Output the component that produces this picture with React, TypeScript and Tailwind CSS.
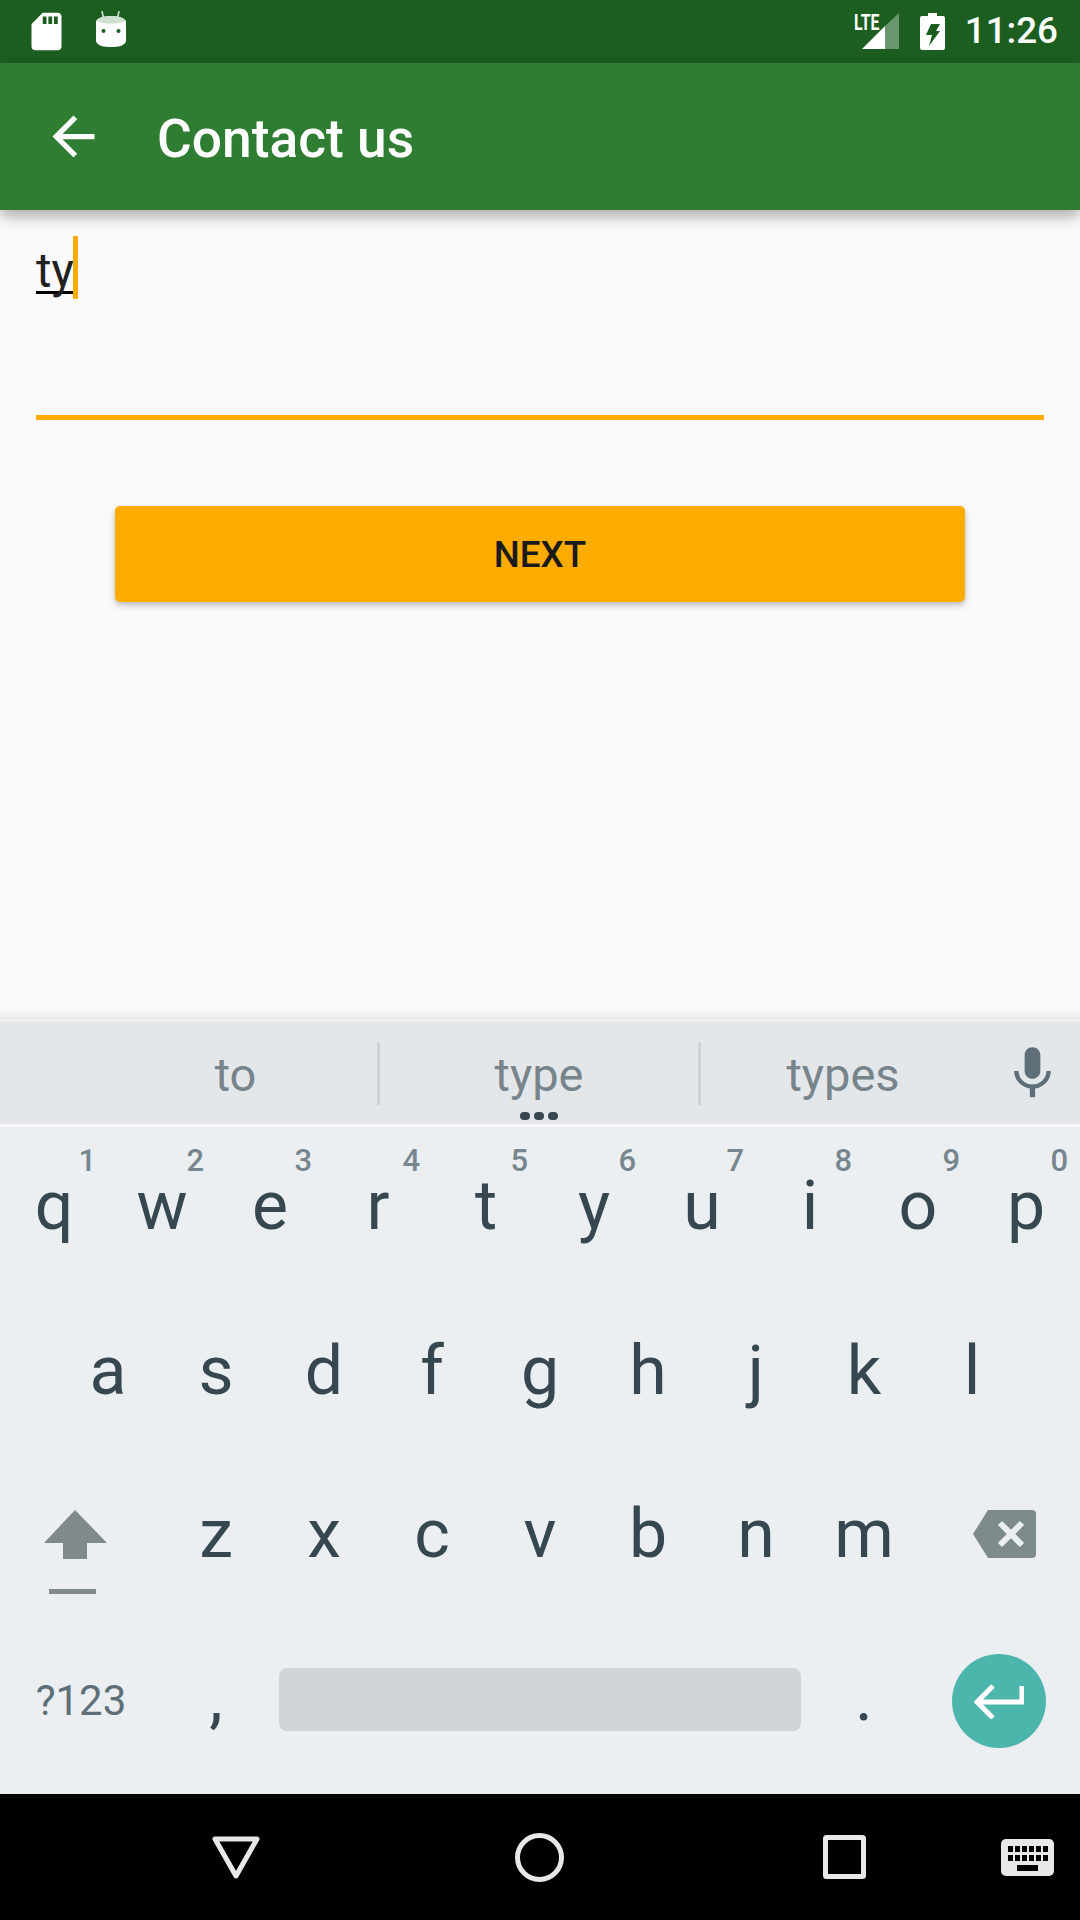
import React from 'react';

const FONT = "font-['Roboto','Noto_Sans',sans-serif]";

const ROWS = {
  top: [
    ['q', '1'], ['w', '2'], ['e', '3'], ['r', '4'], ['t', '5'],
    ['y', '6'], ['u', '7'], ['i', '8'], ['o', '9'], ['p', '0'],
  ],
  middle: ['a', 's', 'd', 'f', 'g', 'h', 'j', 'k', 'l'],
  bottom: ['z', 'x', 'c', 'v', 'b', 'n', 'm'],
};

const Key: React.FC<{ label: string; hint?: string }> = ({ label, hint }) => (
  <div className="relative flex h-full w-[108px] shrink-0 items-center justify-center text-[68px] leading-none text-[#37474f]">
    {hint && (
      <span className="absolute right-[12px] top-[18px] text-[31px] font-medium leading-none text-[#78868d]">{hint}</span>
    )}
    <span className="-mt-[8px]">{label}</span>
  </div>
);

const SdCardIcon = () => (
  <svg width="45" height="45" viewBox="0 0 24 24" fill="#fff">
    <path d="M18 2h-8L4.02 8 4 20c0 1.1.9 2 2 2h12c1.1 0 2-.9 2-2V4c0-1.1-.9-2-2-2zm-6 6h-2V4h2v4zm3 0h-2V4h2v4zm3 0h-2V4h2v4z" />
  </svg>
);

const AndroidIcon = () => (
  <svg width="30" height="37" viewBox="0 0 30 37">
    <path d="M8 10 6 0M21 10l2-10" stroke="#cfe0d0" strokeWidth="1.6" fill="none" />
    <path d="M0 11C0 7 8 5 15 5s15 2 15 6c1 7 1 13 0 19-1 5-8 6-15 6S1 35 0 30c-1-6-1-12 0-19z" fill="#fff" />
    <path d="M0.500 10C2 7 8 5 15 5s13 2 14.500 5c-4 2-9 2.500-14.500 2.500S4 12 0.500 10z" fill="#cfe0d0" />
    <circle cx="7.500" cy="20" r="2" fill="#1b5e20" />
    <circle cx="22.500" cy="20" r="2" fill="#1b5e20" />
  </svg>
);

const SignalIcon = () => (
  <div className="relative h-[37px] w-[46px]">
    <svg className="absolute left-[8px] top-0" width="37" height="37" viewBox="0 0 37 37">
      <path d="M0 36 23 13V36z" fill="#fff" />
      <path d="M23 13 37 0V36H23z" fill="#fff" fillOpacity="0.35" />
    </svg>
    <span className="absolute left-0 top-[1px] origin-left scale-x-[0.72] text-[22px] font-bold leading-[18px] text-white">LTE</span>
  </div>
);

const BatteryIcon = () => (
  <svg width="25" height="37" viewBox="0 0 25 37" fill="#fff">
    <path d="M8 0h9v3h6a2 2 0 0 1 2 2v30a2 2 0 0 1-2 2H2a2 2 0 0 1-2-2V5a2 2 0 0 1 2-2h6z M11 11h9l-4 7h4L9 33l3-11H6z" fillRule="evenodd" />
  </svg>
);

const App: React.FC = () => {
  return (
    <div className={`flex h-[1920px] w-[1080px] flex-col overflow-hidden bg-[#fafafa] ${FONT}`}>
      {/* status bar */}
      <div className="flex h-[63px] shrink-0 items-center bg-[#1b5e20] pl-[24px] pr-[22px]">
        <SdCardIcon />
        <div className="-mt-[5px] ml-[23px] pl-[4px]">
          <AndroidIcon />
        </div>
        <div className="ml-auto flex items-center">
          <SignalIcon />
          <div className="ml-[20px]">
            <BatteryIcon />
          </div>
          <span className="ml-[20px] text-[36.75px] font-medium leading-none text-white">11:26</span>
        </div>
      </div>

      {/* app bar */}
      <div className="relative z-10 flex h-[147px] shrink-0 items-center bg-[#2e7d32] pl-[42px] shadow-[0_6px_14px_rgba(0,0,0,0.32)]">
        <svg width="63" height="63" viewBox="0 0 24 24" fill="#fff">
          <path d="M20 11H7.830l5.590-5.590L12 4l-8 8 8 8 1.410-1.410L7.830 13H20v-2z" />
        </svg>
        <span className="ml-[52px] pt-[6px] text-[53.3px] font-medium leading-none text-white">Contact us</span>
      </div>

      {/* form */}
      <div className="flex flex-1 flex-col px-[36px]">
        <div className="mt-[26px] flex h-[184px] flex-col border-b-[5px] border-[#ffab00]">
          <div className="flex h-[63px] items-start">
            <span className="mt-[3px] block h-[55px] border-b-[3px] border-black text-[47.25px] leading-[64px] text-[#212121]">ty</span>
            <span className="-ml-[1px] h-[63px] w-[5px] bg-[#ffab00]" />
          </div>
        </div>
        <button className="mx-auto mt-[86px] flex h-[96px] w-[850px] items-center justify-center rounded-[5px] bg-[#ffab00] pt-[2px] text-[36.75px] font-medium text-[#1a1a1a] shadow-[0_3px_6px_rgba(0,0,0,0.26)]">
          NEXT
        </button>
        {/* fade where the page meets the keyboard */}
        <div className="-mx-[36px] mt-auto h-[9px] bg-gradient-to-b from-[#fafafa] to-[#e8e8e8]" />
      </div>

      {/* keyboard */}
      <div className="flex shrink-0 flex-col bg-[#eceff2]">
        <div className="h-[3px] bg-[#f0f0f0]" />
        <div className="relative flex h-[102px] items-center bg-[#e3e7ea] pl-[92px] text-[47px] leading-none text-[#78848a]">
          <div className="flex h-[63px] w-[285px] items-center justify-center pl-[2px] pt-[2px]">to</div>
          <div className="flex h-[63px] w-[324px] items-center justify-center border-x-[3px] border-[#ced2d5] pt-[2px]">type</div>
          <div className="flex h-[63px] w-[286px] items-center justify-center pr-[2px] pt-[2px]">types</div>
          <svg className="ml-[14px]" width="63" height="63" viewBox="0 0 24 24" fill="#5f6f77">
            <path d="M12 14c1.660 0 2.990-1.340 2.990-3L15 5c0-1.660-1.340-3-3-3S9 3.340 9 5v6c0 1.660 1.340 3 3 3zm5.300-3c0 3-2.540 5.100-5.300 5.100S6.700 14 6.700 11H5c0 3.410 2.720 6.230 6 6.720V21h2v-3.280c3.280-.48 6-3.300 6-6.720h-1.700z" />
          </svg>
          <div className="absolute bottom-[4px] left-[520px] flex gap-[4px]">
            <span className="h-[8px] w-[10px] rounded-full bg-[#37474f]" />
            <span className="h-[8px] w-[10px] rounded-full bg-[#37474f]" />
            <span className="h-[8px] w-[10px] rounded-full bg-[#37474f]" />
          </div>
        </div>
        <div className="h-[3px] bg-[#f6f7f9]" />

        <div className="flex h-[165px]">
          {ROWS.top.map(([label, hint]) => (
            <Key key={label} label={label} hint={hint} />
          ))}
        </div>
        <div className="flex h-[165px] pl-[54px]">
          {ROWS.middle.map((label) => (
            <Key key={label} label={label} />
          ))}
        </div>
        <div className="flex h-[165px] pb-[3px]">
          <div className="flex h-full w-[162px] shrink-0 items-center pl-[44px]">
            <svg className="mt-[28px]" width="63" height="85" viewBox="0 0 63 85" fill="#80898c">
              <path d="M31 0 63 33H43V49H19V33H0z" />
              <rect x="5" y="79" width="47" height="5" />
            </svg>
          </div>
          {ROWS.bottom.map((label) => (
            <Key key={label} label={label} />
          ))}
          <div className="flex h-full flex-1 items-center pl-[55px]">
            <svg className="-mt-[8px]" width="63" height="48" viewBox="0 0 63 48">
              <path d="M15 0H59a4 4 0 0 1 4 4V44a4 4 0 0 1-4 4H15L0 24z" fill="#7f8a8d" />
              <path d="M27 13 49 35M49 13 27 35" stroke="#eceff2" strokeWidth="6" />
            </svg>
          </div>
        </div>
        <div className="flex h-[172px] items-center pb-[14px]">
          <div className="flex w-[162px] shrink-0 justify-center text-[42px] leading-none text-[#5f6f77]">?123</div>
          <Key label="," />
          <div className="mx-[9px] -mt-[4px] h-[63px] w-[522px] shrink-0 rounded-[8px] bg-[#d1d5d8]" />
          <Key label="." />
          <div className="ml-[34px] -mt-[1px] flex h-[94px] w-[94px] items-center justify-center rounded-full bg-[#4db6ac]">
            <svg width="50" height="36" viewBox="0 0 50 36" fill="none" stroke="#fff" strokeWidth="5">
              <path d="M48 3V19H4M19 3 3 19l16 16" />
            </svg>
          </div>
        </div>
      </div>

      {/* navigation bar */}
      <div className="flex h-[126px] shrink-0 items-center bg-black pl-[212px]">
        <svg width="48" height="43" viewBox="0 0 48 43" fill="none" stroke="#e8e8e8" strokeWidth="5" strokeLinejoin="round">
          <path d="M3 3H45L24 40z" />
        </svg>
        <svg className="ml-[255px]" width="49" height="49" viewBox="0 0 49 49" fill="none" stroke="#e8e8e8" strokeWidth="5">
          <circle cx="24.500" cy="24.500" r="22" />
        </svg>
        <svg className="ml-[259px]" width="43" height="44" viewBox="0 0 43 44" fill="none" stroke="#e8e8e8" strokeWidth="5" strokeLinejoin="round">
          <rect x="2.500" y="2.500" width="38" height="39" rx="1" />
        </svg>
        <svg className="ml-[135px]" width="53" height="37" viewBox="0 0 53 37">
          <rect width="53" height="37" rx="5" fill="#e8e8e8" />
          <path d="M7 7h5v6H7zM14 7h5v6h-5zM21 7h5v6h-5zM28 7h5v6h-5zM35 7h5v6h-5zM42 7h5v6h-5zM7 16h5v6H7zM14 16h5v6h-5zM21 16h5v6h-5zM28 16h5v6h-5zM35 16h5v6h-5zM42 16h5v6h-5zM16 26h21v6H16z" fill="#000" />
        </svg>
      </div>
    </div>
  );
};

export default App;
